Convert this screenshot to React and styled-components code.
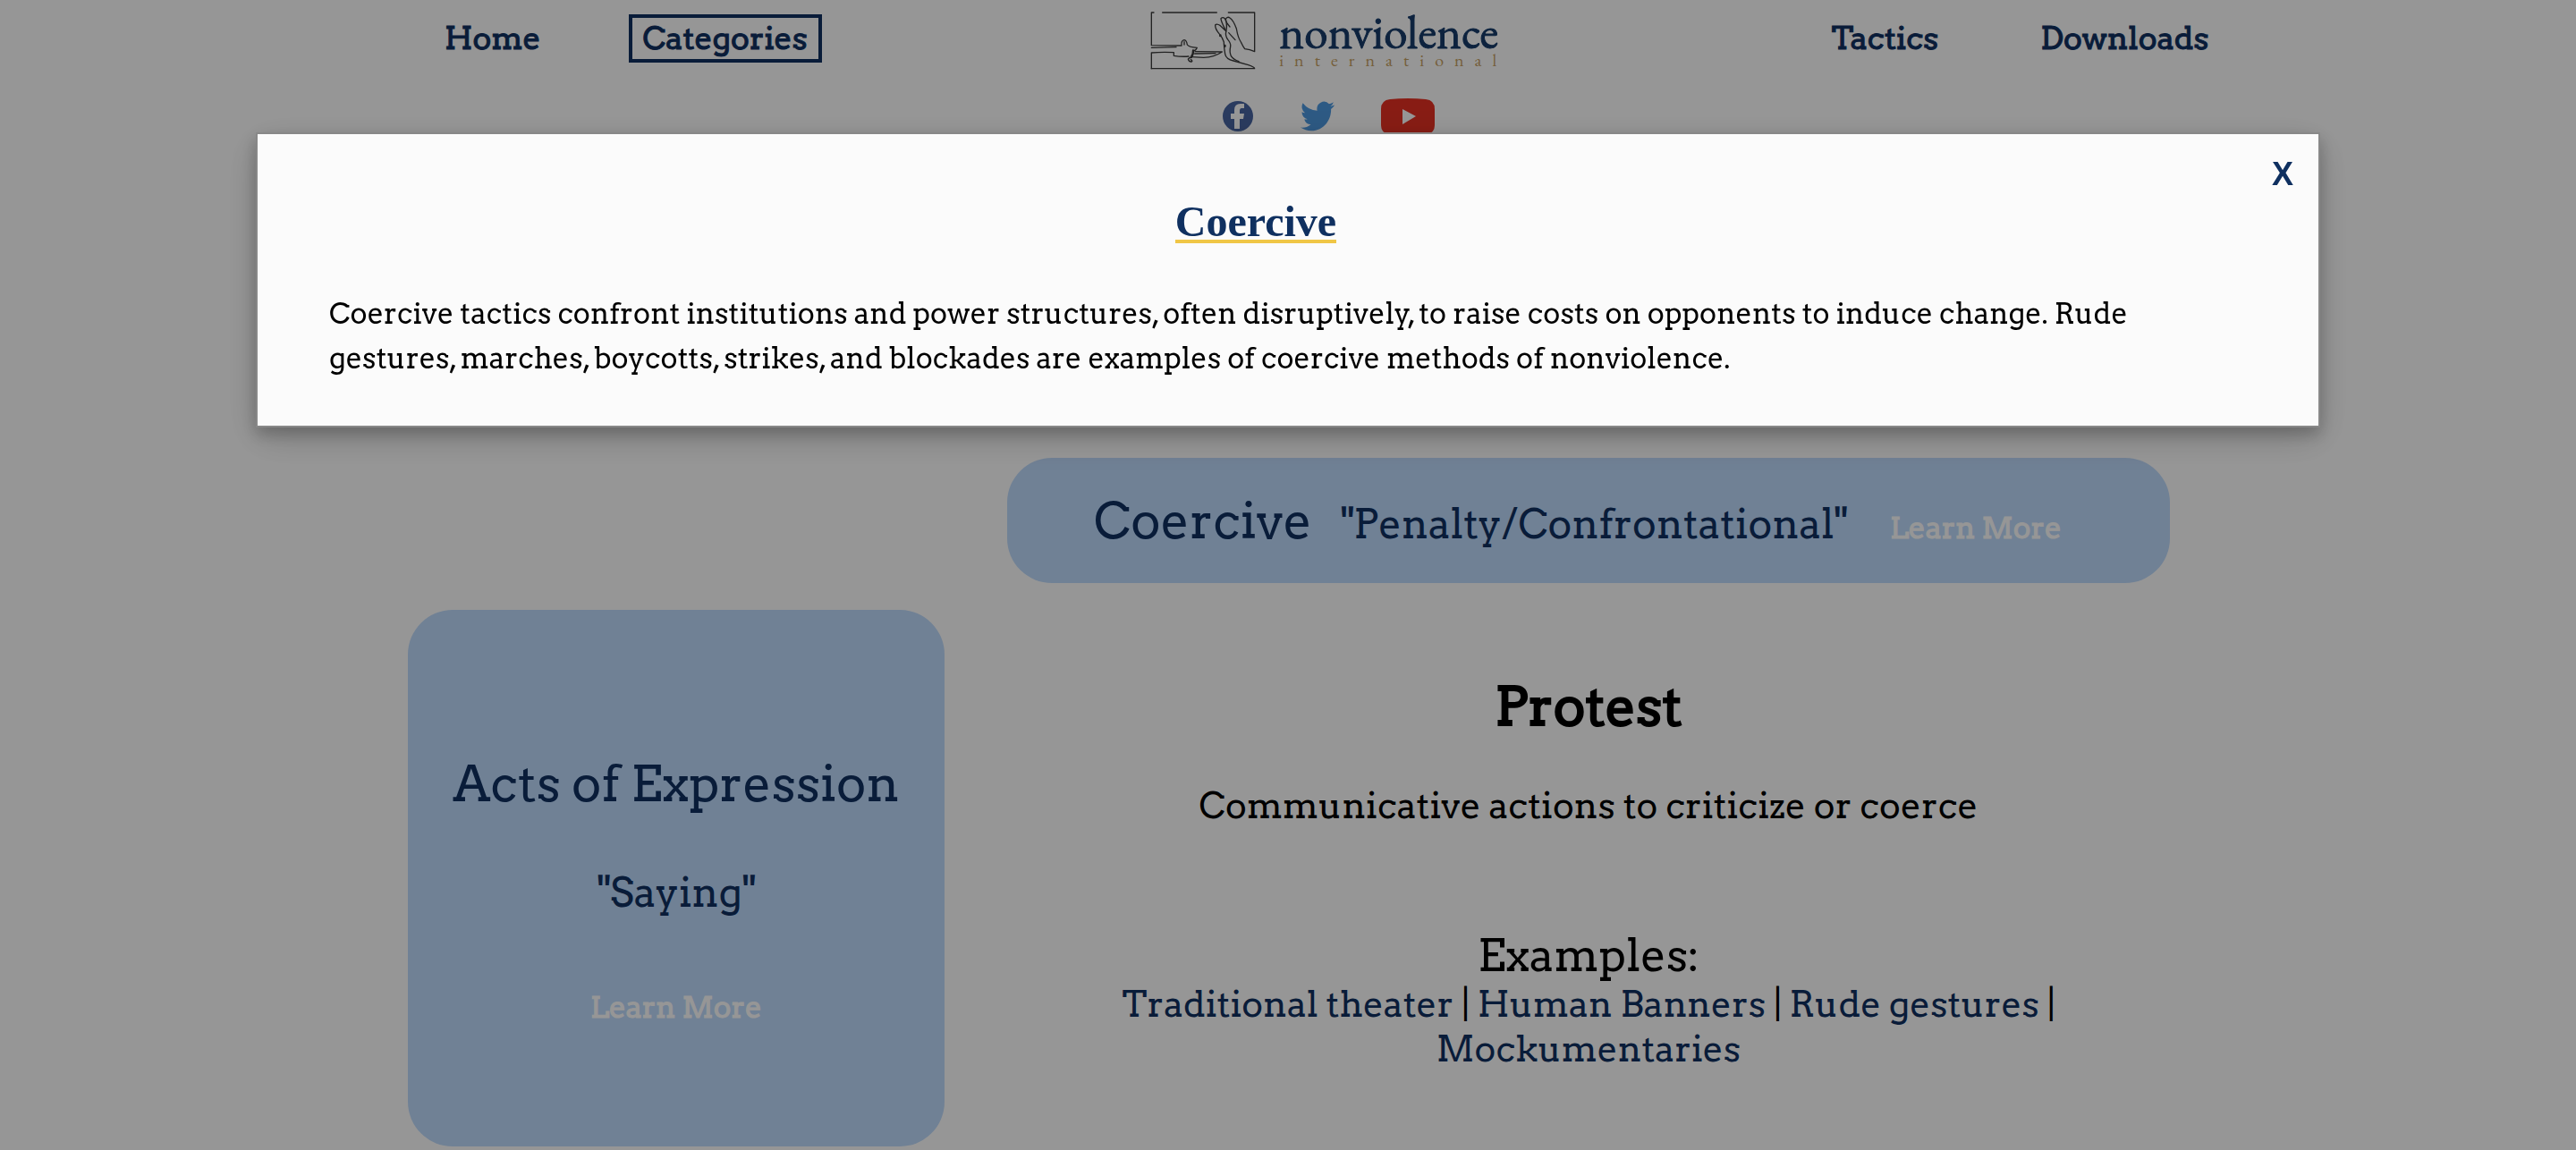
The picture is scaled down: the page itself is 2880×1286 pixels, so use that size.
import React from 'react';
import styled, { createGlobalStyle } from 'styled-components';

const slab = '"Arvo", "DejaVu Serif Condensed", "DejaVu Serif", serif';
const navy = '#0f3060';
const paper = '#fbfbfb';

const GlobalStyle = createGlobalStyle`
  *, *::before, *::after { box-sizing: border-box; }
  html, body { margin: 0; }
  body {
    background: ${paper};
    color: #000;
    font-family: ${slab};
    font-size: 32px;
    overflow: hidden;
  }
  a { color: inherit; text-decoration: none; }
  button { font: inherit; border: 0; background: none; padding: 0; cursor: pointer; }
  h1, h2, h3, p { margin: 0; font-weight: 400; }
`;

const Page = styled.div`
  display: flex;
  flex-direction: column;
`;

const Header = styled.header`
  height: 512px;
  padding: 0 13.7% 0 16.7%;
  display: flex;
  flex-direction: column;
  gap: 24px;
`;

const Nav = styled.nav`
  display: flex;
  justify-content: space-between;
  height: 86px;
`;

const NavGroup = styled.div`
  display: flex;
  align-items: flex-start;
  padding-top: 16px;
  gap: 82px;
`;

const NavLink = styled.a`
  border: 4px solid ${(p) => (p.$active ? navy : 'transparent')};
  padding: 0 12px;
  color: ${navy};
  font-size: 35px;
  line-height: 46px;
  -webkit-text-stroke: 1px ${navy};
`;

const Logo = styled.a`
  display: flex;
  gap: 26px;
  padding: 12px 0 0 10px;

  svg { width: 118px; height: 68px; }
`;

const Wordmark = styled.span`
  display: flex;
  flex-direction: column;
  width: 244px;
  font-family: "EB Garamond", "Liberation Serif", serif;
`;

const WordmarkName = styled.span`
  color: #163a68;
  font-size: 53px;
  line-height: 48px;
  -webkit-text-stroke: 1px #163a68;
`;

const WordmarkSub = styled.span`
  color: #c49e63;
  font-size: 20px;
  line-height: 14px;
  letter-spacing: 12px;
`;

const Social = styled.div`
  display: flex;
  justify-content: center;
  align-items: flex-start;
  gap: 52px;
  padding-left: 4px;

  a { display: block; }
  svg { display: block; }
`;

const Board = styled.main`
  display: grid;
  grid-template-columns: 600px 1300px;
  column-gap: 70px;
  row-gap: 30px;
  justify-content: center;
  padding-left: 2px;
`;

const ColumnHead = styled.section`
  grid-column: 2;
  height: 140px;
  border-radius: 50px;
  background: #bbd7f8;
  color: ${navy};
  display: flex;
  justify-content: center;
  align-items: baseline;
  padding: 34px 24px 0 0;
`;

const RowHead = styled.section`
  height: 600px;
  border-radius: 50px;
  background: #bbd7f8;
  color: ${navy};
  display: flex;
  flex-direction: column;
  align-items: center;
  padding-top: 158px;
  gap: 50px;
`;

const HeadTitle = styled.h2`
  font-size: 56px;
  line-height: 72px;
`;

const HeadQuote = styled.p`
  font-size: 45px;
  line-height: 72px;
  margin: 0 ${(p) => (p.$inline ? '48px 0 32px' : '0')};
`;

const LearnMore = styled.button`
  color: ${paper};
  font-size: 33px;
  line-height: 84px;
  -webkit-text-stroke: 1px ${paper};
`;

const Cell = styled.section`
  padding: 72px 120px 0;
  text-align: center;
`;

const CellTitle = styled.h2`
  font-size: 60px;
  line-height: 72px;
  -webkit-text-stroke: 2px #000;
`;

const CellText = styled.p`
  font-size: 40px;
  line-height: 50px;
  margin-top: 50px;
`;

const ExamplesTitle = styled.h3`
  font-size: 50px;
  line-height: 60px;
  margin-top: 112px;
`;

const Examples = styled.p`
  font-size: 40px;
  line-height: 50px;

  a { color: ${navy}; }
`;

const Overlay = styled.div`
  position: fixed;
  inset: 0;
  padding-top: 148px;
  background: rgba(0, 0, 0, 0.4);
`;

const Dialog = styled.section`
  position: relative;
  box-sizing: content-box;
  width: 80%;
  margin: 0 auto;
  background: ${paper};
  border: 2px solid #888;
  box-shadow: 0 8px 16px rgba(0, 0, 0, 0.2), 0 12px 40px rgba(0, 0, 0, 0.19);
`;

const CloseButton = styled.button`
  position: absolute;
  top: 24px;
  right: 28px;
  color: ${navy};
  font-family: "Liberation Sans", Arial, sans-serif;
  font-size: 36px;
  font-weight: 700;
  line-height: 42px;
`;

const DialogBody = styled.div`
  padding: 78px 152px 50px 80px;
  display: flex;
  flex-direction: column;
  align-items: center;
  gap: 54px;
`;

const DialogTitle = styled.h1`
  border-bottom: 4px solid #f0c646;
  color: ${navy};
  font-family: "Liberation Serif", "Times New Roman", serif;
  font-size: 48px;
  font-weight: 700;
  line-height: 40px;
`;

const DialogText = styled.p`
  align-self: stretch;
  line-height: 50px;
`;

function HandsMark() {
  return (
    <svg viewBox="21 20 354 204" fill="none" stroke="#3a3a3a" strokeWidth="4" strokeLinecap="round" strokeLinejoin="round" aria-hidden="true">
      <path d="M33 26H25V136L126 137Q124 119 135 118Q143 119 145 134Q150 142 178 144Q173 156 165 155" />
      <path d="M25 144L108 142M62 26H244M135 124V134" />
      <path d="M172 157L262 158Q235 176 200 177L160 175M170 164L240 163" />
      <path d="M165 153Q166 166 158 176" strokeWidth="7" />
      <path d="M160 176Q150 178 148 182Q151 192 160 191Q164 188 157 184M25 214V161Q60 158 100 160V171Q125 175 150 173" />
      <path d="M25 214H371Q371 209 350 202L300 188Q275 182 272 165Q268 140 268 125Q262 108 252 97Q238 80 239 68Q244 62 256 70L275 88Q258 55 258 46Q264 40 271 46Q275 60 288 74" />
      <path d="M275 90Q280 70 274 48Q280 38 288 44Q300 52 310 80Q315 110 325 125Q332 140 338 148Q355 150 371 157V26H283" />
      <path d="M284 94L306 118M275 90Q272 105 282 118Q292 130 290 140Q286 158 292 172Q300 184 318 190" />
      <path d="M271 137V139M256 103V104" strokeWidth="8" />
    </svg>
  );
}

const examples = ['Traditional theater', 'Human Banners', 'Rude gestures', 'Mockumentaries'];

export default function App() {
  return (
    <>
      <GlobalStyle />
      <Page>
        <Header>
          <Nav>
            <NavGroup>
              <NavLink href="#home">Home</NavLink>
              <NavLink href="#categories" $active>Categories</NavLink>
            </NavGroup>
            <Logo href="#nonviolence-international">
              <HandsMark />
              <Wordmark>
                <WordmarkName>nonviolence</WordmarkName>
                <WordmarkSub>international</WordmarkSub>
              </Wordmark>
            </Logo>
            <NavGroup>
              <NavLink href="#tactics">Tactics</NavLink>
              <NavLink href="#downloads">Downloads</NavLink>
            </NavGroup>
          </Nav>
          <Social>
            <a href="#facebook" aria-label="Facebook">
              <svg width="36" height="38" viewBox="0 0 36 38">
                <circle cx="18" cy="20" r="17" fill="#47639f" />
                <path d="M14 34V23H10V17H14V13Q14 6 21 6H25V11H22Q20 11 20 14V17H25L24 23H20V34Z" fill={paper} />
              </svg>
            </a>
            <a href="#twitter" aria-label="Twitter">
              <svg width="38" height="40" viewBox="0 0 24 24" preserveAspectRatio="none">
                <path fill="#4c96dc" d="M23.95 4.57a10 10 0 0 1-2.82.78 4.96 4.96 0 0 0 2.16-2.73 9.9 9.9 0 0 1-3.12 1.19 4.92 4.92 0 0 0-8.39 4.49A14 14 0 0 1 1.64 3.16a4.92 4.92 0 0 0 1.52 6.57 4.9 4.9 0 0 1-2.23-.62v.06a4.92 4.92 0 0 0 3.95 4.83 5 5 0 0 1-2.21.08 4.94 4.94 0 0 0 4.6 3.42A9.87 9.87 0 0 1 0 19.54a14 14 0 0 0 7.55 2.21c9.05 0 14-7.5 14-13.98 0-.21 0-.42-.02-.63a9.94 9.94 0 0 0 2.46-2.55z" />
              </svg>
            </a>
            <a href="#youtube" aria-label="YouTube">
              <svg width="60" height="42" viewBox="0 0 60 42">
                <path d="M10 1Q30 -1 50 1Q60 2 60 12V30Q60 38 52 40H8Q0 38 0 30V12Q0 2 10 1Z" fill="#e33022" />
                <path d="M24 12L39 20L24 29Z" fill={paper} />
              </svg>
            </a>
          </Social>
        </Header>
        <Board>
          <ColumnHead>
            <HeadTitle>Coercive</HeadTitle>
            <HeadQuote $inline>"Penalty/Confrontational"</HeadQuote>
            <LearnMore type="button">Learn More</LearnMore>
          </ColumnHead>
          <RowHead>
            <HeadTitle>Acts of Expression</HeadTitle>
            <HeadQuote>"Saying"</HeadQuote>
            <LearnMore type="button">Learn More</LearnMore>
          </RowHead>
          <Cell>
            <CellTitle>Protest</CellTitle>
            <CellText>Communicative actions to criticize or coerce</CellText>
            <ExamplesTitle>Examples:</ExamplesTitle>
            <Examples>
              {examples.map((name, i) => (
                <React.Fragment key={name}>
                  {i > 0 && ' | '}
                  <a href="#example">{name}</a>
                </React.Fragment>
              ))}
            </Examples>
          </Cell>
        </Board>
      </Page>
      <Overlay>
        <Dialog role="dialog" aria-modal="true" aria-labelledby="dialog-title">
          <CloseButton type="button" aria-label="Close">X</CloseButton>
          <DialogBody>
            <DialogTitle id="dialog-title">Coercive</DialogTitle>
            <DialogText>
              Coercive tactics confront institutions and power structures, often disruptively, to raise costs on
              opponents to induce change. Rude gestures, marches, boycotts, strikes, and blockades are examples of
              coercive methods of nonviolence.
            </DialogText>
          </DialogBody>
        </Dialog>
      </Overlay>
    </>
  );
}
